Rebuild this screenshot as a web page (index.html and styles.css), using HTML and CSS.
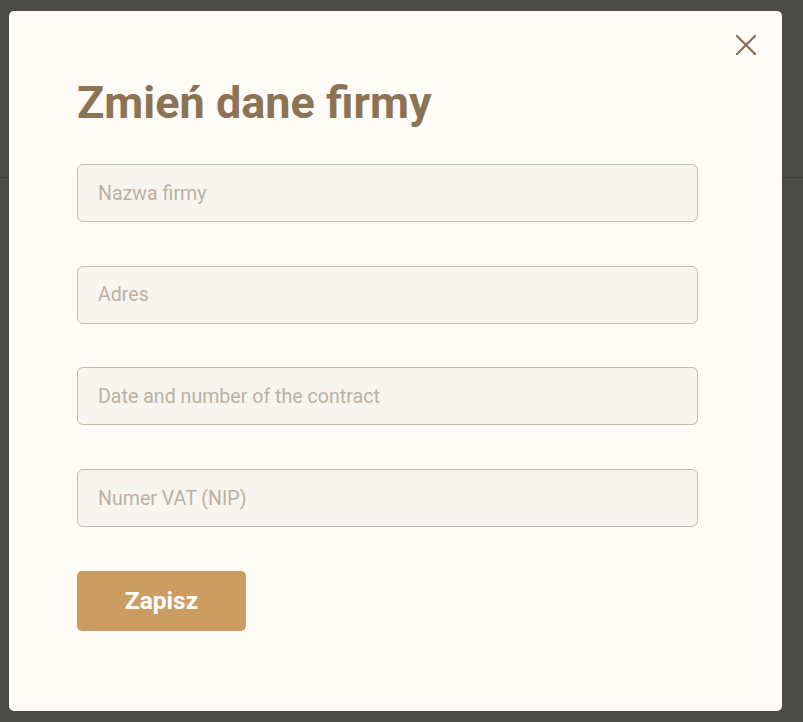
FILE: index.html
```html
<!DOCTYPE html>
<html lang="pl">
<head>
<meta charset="utf-8">
<title>Zmień dane firmy</title>
<link rel="stylesheet" href="styles.css">
</head>
<body>
<div class="backdrop">
  <div class="page-line"></div>
  <div class="modal">
    <button class="close" type="button" aria-label="Zamknij">
      <svg width="20" height="20" viewBox="0 0 20 20"><path d="M1 1L19 19M19 1L1 19" stroke="#8b7356" stroke-width="2.4" stroke-linecap="round" fill="none"/></svg>
    </button>
    <h1 class="title">Zmień dane firmy</h1>
    <form class="form">
      <input class="field" type="text" placeholder="Nazwa firmy">
      <input class="field" type="text" placeholder="Adres">
      <input class="field" type="text" placeholder="Date and number of the contract">
      <input class="field" type="text" placeholder="Numer VAT (NIP)">
      <button class="submit" type="button">Zapisz</button>
    </form>
  </div>
</div>
</body>
</html>
```
FILE: styles.css
```css
html, body {
  margin: 0;
  padding: 0;
  height: 100%;
}
body {
  background: #4b4b49;
  font-family: Roboto, "Noto Sans", sans-serif;
}
.backdrop {
  position: relative;
  width: 803px;
  height: 722px;
  padding: 11px 21px 0 9px;
  box-sizing: border-box;
}
.page-line {
  position: absolute;
  left: 0;
  right: 0;
  top: 177px;
  height: 1px;
  background: #3d3d3b;
}
.modal {
  position: relative;
  width: 773px;
  height: 700px;
  background: #fffcf8;
  border-radius: 5px;
  padding: 67px 84px 0 68px;
  box-sizing: border-box;
}
.close {
  position: absolute;
  top: 23px;
  right: 25px;
  width: 22px;
  height: 22px;
  padding: 1px;
  border: none;
  background: none;
  cursor: pointer;
  display: flex;
  align-items: center;
  justify-content: center;
}
.title {
  margin: 0;
  font-size: 45px;
  line-height: 50px;
  font-weight: 700;
  color: #8b7356;
}
.form {
  display: flex;
  flex-direction: column;
  align-items: flex-start;
  gap: 43.7px;
  margin-top: 36px;
}
.field {
  width: 621px;
  height: 58px;
  box-sizing: border-box;
  border: 1.5px solid #cbbcaa;
  border-radius: 6px;
  background: #f8f5f0;
  padding: 0 20px;
  font-family: Roboto, "Noto Sans", sans-serif;
  font-size: 19.6px;
  color: #6b5a47;
  outline: none;
}
.field::placeholder {
  color: #bdb0a2;
  opacity: 1;
}
.submit {
  width: 169px;
  height: 60px;
  border: none;
  border-radius: 5px;
  background: #cc9d63;
  color: #ffffff;
  font-family: Roboto, "Noto Sans", sans-serif;
  font-size: 24.5px;
  font-weight: 700;
  cursor: pointer;
}
```
